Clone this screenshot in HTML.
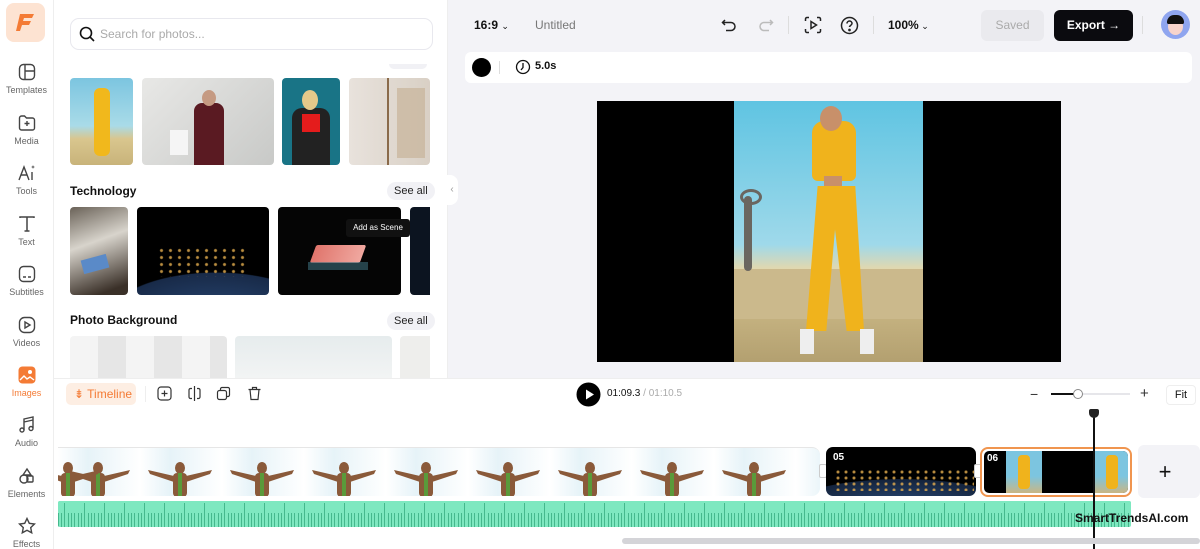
<!DOCTYPE html>
<html><head><meta charset="utf-8"><style>
*{margin:0;padding:0;box-sizing:border-box}
body{width:1200px;height:549px;overflow:hidden;font-family:"Liberation Sans",sans-serif;background:#fff;position:relative;color:#111}
.a{position:absolute}
.side{left:0;top:0;width:54px;height:549px;background:#fff;border-right:1px solid #eee}
.si{position:absolute;left:0;width:53px;text-align:center;font-size:9px;color:#666}
.si svg{display:block;margin:0 auto 4px}
.thumb{position:absolute;border-radius:4px;overflow:hidden}
.seeall{position:absolute;font-size:11px;color:#222;background:#f1f1f5;border-radius:10px;padding:3px 7px}
.h{position:absolute;font-size:12px;font-weight:bold;color:#111}
.ico{position:absolute}
</style></head><body>

<div class="a side">
  <div class="a" style="left:6px;top:3px;width:39px;height:39px;border-radius:8px;background:#fde3d2"></div>
  <svg class="a" style="left:14px;top:10px" width="24" height="24" viewBox="0 0 24 24"><path d="M6 4h14l-2 4H10l-1 3h8l-2 4H8l-2 6H2z" fill="#f47b35"/></svg>
  <div class="si" style="top:63px"><svg width="18" height="18" viewBox="0 0 18 18" fill="none" stroke="#444" stroke-width="1.4"><rect x="1.5" y="1.5" width="15" height="15" rx="4"/><path d="M7 1.5v15M7 8h9.5"/></svg>Templates</div>
  <div class="si" style="top:114px"><svg width="18" height="18" viewBox="0 0 18 18" fill="none" stroke="#444" stroke-width="1.4"><path d="M1.5 4a2 2 0 012-2h3l2 2h6a2 2 0 012 2v8a2 2 0 01-2 2h-11a2 2 0 01-2-2z"/><path d="M9 7v5M6.5 9.5h5"/></svg>Media</div>
  <div class="si" style="top:164px"><svg width="20" height="18" viewBox="0 0 20 18" fill="none" stroke="#444" stroke-width="1.4"><path d="M2 16L7 3l5 13M4 11h6M15 8v8"/><path d="M16 1l.5 1.5L18 3l-1.5.5L16 5l-.5-1.5L14 3l1.5-.5z" fill="#444" stroke="none"/></svg>Tools</div>
  <div class="si" style="top:215px"><svg width="18" height="18" viewBox="0 0 18 18" fill="none" stroke="#444" stroke-width="1.5"><path d="M2 3V2h14v1M9 2v14M6.5 16h5"/></svg>Text</div>
  <div class="si" style="top:265px"><svg width="18" height="18" viewBox="0 0 18 18" fill="none" stroke="#444" stroke-width="1.4"><rect x="1.5" y="1.5" width="15" height="15" rx="4"/><path d="M5 12h3M10 12h3"/></svg>Subtitles</div>
  <div class="si" style="top:316px"><svg width="18" height="18" viewBox="0 0 18 18" fill="none" stroke="#444" stroke-width="1.4"><rect x="1.5" y="1.5" width="15" height="15" rx="5"/><path d="M7 6v6l5-3z"/></svg>Videos</div>
  <div class="si" style="top:366px;color:#f47b35"><svg width="18" height="18" viewBox="0 0 18 18"><rect x="0.5" y="0.5" width="17" height="17" rx="4" fill="#f47b35"/><circle cx="12" cy="6" r="2" fill="#fff"/><path d="M2 14l4-4 3 3 3-2 4 3" fill="none" stroke="#fff" stroke-width="1.4"/></svg>Images</div>
  <div class="si" style="top:416px"><svg width="18" height="18" viewBox="0 0 18 18" fill="none" stroke="#444" stroke-width="1.4"><path d="M6 14V3l9-2v11M6 6l9-2"/><circle cx="4" cy="14" r="2"/><circle cx="13" cy="12.5" r="2"/></svg>Audio</div>
  <div class="si" style="top:467px"><svg width="18" height="18" viewBox="0 0 18 18" fill="none" stroke="#444" stroke-width="1.4"><path d="M9 2l4 6H5z"/><circle cx="6" cy="12" r="4"/><rect x="9" y="9" width="6" height="6" rx="1"/></svg>Elements</div>
  <div class="si" style="top:517px"><svg width="18" height="18" viewBox="0 0 18 18" fill="none" stroke="#444" stroke-width="1.4"><path d="M9 1.5l2.3 4.8 5.2.7-3.8 3.6 1 5.2L9 13.3l-4.7 2.5 1-5.2L1.5 7l5.2-.7z"/></svg>Effects</div>
</div>

<div class="a" style="left:54px;top:0;width:394px;height:378px;background:#fff;border-right:1px solid #eee">
  <div class="a" style="left:16px;top:18px;width:363px;height:32px;border:1px solid #e8e8ee;border-radius:9px"></div>
  <svg class="a" style="left:25px;top:26px" width="16" height="16" viewBox="0 0 16 16" fill="none" stroke="#111" stroke-width="1.6"><circle cx="7" cy="7" r="5.5"/><path d="M11 11l4 4"/></svg>
  <div class="a" style="left:46px;top:27px;font-size:12px;color:#aaa">Search for photos...</div>
  <div class="a" style="left:335px;top:64px;width:38px;height:5px;background:#f1f1f5;border-radius:0 0 5px 5px"></div>
  <div class="thumb" style="left:16px;top:78px;width:63px;height:87px;background:linear-gradient(180deg,#7cc5e0 0%,#a9dbe8 55%,#d9c68e 70%,#c8b37a 100%)">
    <div class="a" style="left:24px;top:10px;width:16px;height:68px;background:#f1b81c;border-radius:6px"></div></div>
  <div class="thumb" style="left:88px;top:78px;width:132px;height:87px;background:linear-gradient(135deg,#e8e8e6,#c8c9c7)">
    <div class="a" style="left:52px;top:25px;width:30px;height:62px;background:#5a1a22;border-radius:8px 8px 0 0"></div>
    <div class="a" style="left:60px;top:12px;width:14px;height:16px;background:#c59a82;border-radius:50%"></div>
    <div class="a" style="left:28px;top:52px;width:18px;height:25px;background:#f5f5f5"></div></div>
  <div class="thumb" style="left:228px;top:78px;width:58px;height:87px;background:#197486">
    <div class="a" style="left:10px;top:30px;width:38px;height:57px;background:#222;border-radius:10px 10px 0 0"></div>
    <div class="a" style="left:20px;top:36px;width:18px;height:18px;background:#e41c1c"></div>
    <div class="a" style="left:20px;top:12px;width:16px;height:20px;background:#e4c98a;border-radius:50%"></div></div>
  <div class="thumb" style="left:295px;top:78px;width:81px;height:87px;background:linear-gradient(90deg,#e8e2dc,#d9d0c5)">
    <div class="a" style="left:38px;top:0;width:2px;height:87px;background:#8a6a4a"></div>
    <div class="a" style="left:48px;top:10px;width:28px;height:70px;background:#c8b39a;opacity:.7"></div></div>
  <div class="h" style="left:16px;top:184px">Technology</div>
  <div class="seeall" style="left:333px;top:182px">See all</div>
  <div class="thumb" style="left:16px;top:207px;width:58px;height:88px;background:linear-gradient(160deg,#6a6258,#d8d4cc 40%,#3a3028 90%)">
    <div class="a" style="left:12px;top:50px;width:26px;height:14px;background:#5a8ac8;transform:rotate(-15deg)"></div></div>
  <div class="thumb" style="left:83px;top:207px;width:132px;height:88px;background:radial-gradient(ellipse 150% 100% at 60% 130%,#2a4a78 0%,#182a48 55%,#000 56%)">
    <div class="a" style="left:20px;top:40px;width:90px;height:30px;background:radial-gradient(circle,#e8b050 1px,transparent 2px) 0 0/9px 7px;opacity:.8"></div></div>
  <div class="thumb" style="left:224px;top:207px;width:123px;height:88px;background:#050505">
    <div class="a" style="left:35px;top:38px;width:50px;height:18px;background:linear-gradient(90deg,#e0756c,#f0a8a0);transform:skewX(-20deg);border-radius:2px"></div>
    <div class="a" style="left:30px;top:55px;width:60px;height:8px;background:#3a6a78;opacity:.6"></div></div>
  <div class="thumb" style="left:356px;top:207px;width:20px;height:88px;background:#0c1420;border-radius:4px 0 0 4px"></div>
  <div class="a" style="left:292px;top:219px;width:64px;height:18px;background:#111;border-radius:3px;color:#fff;font-size:8px;line-height:18px;text-align:center">Add as Scene</div>
  <div class="h" style="left:16px;top:313px">Photo Background</div>
  <div class="seeall" style="left:333px;top:312px">See all</div>
  <div class="thumb" style="left:16px;top:336px;width:157px;height:42px;border-radius:4px 4px 0 0;background:repeating-linear-gradient(90deg,#f4f4f4 0 28px,#e6e6e6 28px 56px)"></div>
  <div class="thumb" style="left:181px;top:336px;width:157px;height:42px;border-radius:4px 4px 0 0;background:linear-gradient(#e6eced,#f2f4f4)"></div>
  <div class="thumb" style="left:346px;top:336px;width:30px;height:42px;border-radius:4px 0 0 0;background:#eeeeec"></div>
</div>

<div class="a" style="left:448px;top:0;width:752px;height:378px;background:#f3f3f7"></div>
<div class="a" style="left:446px;top:175px;width:12px;height:30px;background:#fff;border-radius:0 8px 8px 0;color:#999;font-size:10px;line-height:30px;text-align:center">‹</div>
<div class="a" style="left:474px;top:18px;font-size:12px;font-weight:bold">16:9 <span style="font-weight:normal;font-size:9px">⌄</span></div>
<div class="a" style="left:535px;top:18px;font-size:12px;color:#777">Untitled</div>
<svg class="ico" style="left:721px;top:17px" width="16" height="16" viewBox="0 0 16 16" fill="none" stroke="#222" stroke-width="1.5"><path d="M4 3L1.5 5.5 4 8M1.5 5.5H10a4 4 0 010 8H5"/></svg>
<svg class="ico" style="left:758px;top:17px" width="16" height="16" viewBox="0 0 16 16" fill="none" stroke="#bbb" stroke-width="1.5"><path d="M12 3l2.5 2.5L12 8M14.5 5.5H6a4 4 0 000 8h5"/></svg>
<div class="a" style="left:788px;top:16px;width:1px;height:18px;background:#ddd"></div>
<svg class="ico" style="left:804px;top:16px" width="18" height="18" viewBox="0 0 18 18" fill="none" stroke="#222" stroke-width="1.5"><path d="M1.5 5V3a1.5 1.5 0 011.5-1.5h2M13 1.5h2A1.5 1.5 0 0116.5 3v2M16.5 13v2a1.5 1.5 0 01-1.5 1.5h-2M5 16.5H3A1.5 1.5 0 011.5 15v-2"/><path d="M7 5.5v7l5.5-3.5z"/></svg>
<svg class="ico" style="left:840px;top:16px" width="19" height="19" viewBox="0 0 19 19" fill="none" stroke="#222" stroke-width="1.5"><circle cx="9.5" cy="9.5" r="8"/><path d="M7 7.5a2.5 2.5 0 115 0c0 1.7-2.5 2-2.5 3.5"/><circle cx="9.5" cy="14" r=".6" fill="#222"/></svg>
<div class="a" style="left:873px;top:16px;width:1px;height:18px;background:#ddd"></div>
<div class="a" style="left:888px;top:18px;font-size:12px;font-weight:bold">100%<span style="font-weight:normal;font-size:9px"> ⌄</span></div>
<div class="a" style="left:981px;top:10px;width:63px;height:31px;background:#eaeaee;border-radius:6px;color:#aaa;font-size:12px;line-height:31px;text-align:center">Saved</div>
<div class="a" style="left:1054px;top:10px;width:79px;height:31px;background:#0b0b0f;border-radius:6px;color:#fff;font-size:12px;font-weight:bold;line-height:31px;text-align:center">Export →</div>
<div class="a" style="left:1142px;top:16px;width:1px;height:18px;background:#ddd"></div>
<div class="a" style="left:1161px;top:10px;width:29px;height:29px;border-radius:50%;background:#8fa5ef;overflow:hidden">
  <div class="a" style="left:7px;top:8px;width:15px;height:17px;border-radius:50%;background:#f7d4cc"></div>
  <div class="a" style="left:6px;top:5px;width:17px;height:9px;border-radius:8px 8px 2px 2px;background:#111"></div></div>
<div class="a" style="left:465px;top:52px;width:727px;height:31px;background:#fff;border-radius:6px"></div>
<div class="a" style="left:472px;top:58px;width:19px;height:19px;border-radius:50%;background:#000"></div>
<div class="a" style="left:499px;top:61px;width:1px;height:13px;background:#ddd"></div>
<svg class="ico" style="left:515px;top:59px" width="16" height="16" viewBox="0 0 16 16" fill="none" stroke="#111" stroke-width="1.3"><circle cx="8" cy="8" r="6.5"/><path d="M8 4v4.5L6 11"/></svg>
<div class="a" style="left:535px;top:60px;font-size:11px;font-weight:bold">5.0s</div>
<div class="a" style="left:597px;top:101px;width:464px;height:261px;background:#000"></div>
<div class="a" style="left:734px;top:101px;width:189px;height:261px;overflow:hidden;background:linear-gradient(180deg,#5fc4e2 0%,#9fd9ea 55%,#e0d8b0 64%,#c9b684 78%,#b3a070 100%)">
  <div class="a" style="left:0;top:168px;width:189px;height:50px;background:#cbb98c"></div>
  <div class="a" style="left:10px;top:95px;width:8px;height:75px;background:#6a6660;border-radius:4px"></div>
  <div class="a" style="left:6px;top:88px;width:22px;height:16px;border:3px solid #6a6660;border-radius:50%"></div>
  <div class="a" style="left:78px;top:20px;width:44px;height:60px;background:#f0b31c;border-radius:12px 12px 6px 6px"></div>
  <div class="a" style="left:86px;top:5px;width:22px;height:25px;background:#c8906a;border-radius:50%"></div>
  <div class="a" style="left:90px;top:75px;width:18px;height:10px;background:#c8906a"></div>
  <div class="a" style="left:72px;top:85px;width:58px;height:145px;background:#f0b31c;clip-path:polygon(20% 0,85% 0,100% 100%,70% 100%,50% 30%,35% 100%,0 100%)"></div>
  <div class="a" style="left:66px;top:228px;width:14px;height:25px;background:#eee"></div>
  <div class="a" style="left:126px;top:228px;width:14px;height:25px;background:#eee"></div>
</div>

<div class="a" style="left:54px;top:378px;width:1146px;height:171px;background:#fff;border-top:1px solid #eee"></div>
<div class="a" style="left:66px;top:383px;width:70px;height:22px;background:#fdeee3;border-radius:5px;color:#f47b35;font-size:12px;line-height:22px;padding-left:8px">⇟ Timeline</div>
<div class="a" style="left:145px;top:386px;width:1px;height:16px;background:#eee"></div>
<svg class="ico" style="left:157px;top:386px" width="15" height="15" viewBox="0 0 15 15" fill="none" stroke="#333" stroke-width="1.2"><rect x="1" y="1" width="13" height="13" rx="3"/><path d="M7.5 4.5v6M4.5 7.5h6"/></svg>
<svg class="ico" style="left:187px;top:386px" width="15" height="15" viewBox="0 0 15 15" fill="none" stroke="#333" stroke-width="1.2"><path d="M7.5 0v15M5 2.5H3.5A1.5 1.5 0 002 4v7a1.5 1.5 0 001.5 1.5H5M10 2.5h1.5A1.5 1.5 0 0113 4v7a1.5 1.5 0 01-1.5 1.5H10"/></svg>
<svg class="ico" style="left:216px;top:386px" width="15" height="15" viewBox="0 0 15 15" fill="none" stroke="#333" stroke-width="1.2"><rect x="1.5" y="4.5" width="9" height="9" rx="2"/><path d="M4.5 4.5V3a1.5 1.5 0 011.5-1.5h6A1.5 1.5 0 0113.5 3v6a1.5 1.5 0 01-1.5 1.5h-1.5"/></svg>
<svg class="ico" style="left:247px;top:386px" width="15" height="15" viewBox="0 0 15 15" fill="none" stroke="#333" stroke-width="1.2"><path d="M1.5 3.5h12M5.5 3.5V1.5h4v2M3 3.5l1 10h7l1-10"/></svg>
<svg class="ico" style="left:576px;top:382px" width="25" height="25" viewBox="0 0 25 25"><circle cx="12.5" cy="12.5" r="12" fill="#000"/><path d="M10 7.5v10l8-5z" fill="#fff"/></svg>
<div class="a" style="left:607px;top:388px;font-size:10px">01:09.3 <span style="color:#aaa">/ 01:10.5</span></div>
<div class="a" style="left:1030px;top:386px;font-size:14px;color:#333">−</div>
<div class="a" style="left:1051px;top:393px;width:26px;height:2px;background:#111"></div>
<div class="a" style="left:1077px;top:393px;width:53px;height:2px;background:#e6e6ea"></div>
<div class="a" style="left:1073px;top:389px;width:10px;height:10px;border-radius:50%;background:#fff;border:1px solid #888"></div>
<div class="a" style="left:1140px;top:385px;font-size:15px;color:#333">+</div>
<div class="a" style="left:1166px;top:385px;width:30px;height:20px;border:1px solid #eee;border-radius:4px;font-size:11px;line-height:18px;text-align:center">Fit</div>

<div class="a" style="left:58px;top:447px;width:762px;height:49px;border-radius:0 8px 8px 0;overflow:hidden;border-top:1px solid #e6e6e6;background:repeating-linear-gradient(90deg,#fff 0,#e6f3f8 30px,#fff 82px)">
  <svg width="762" height="49" style="position:absolute;left:0;top:0">
    <g fill="#8a5a3a">
      <g id="m"><ellipse cx="40" cy="20" rx="5" ry="6"/><rect x="33" y="25" width="14" height="24" rx="4"/><path d="M34 28L8 22 10 26 34 34zM46 28L72 22 70 26 46 34z"/><rect x="38" y="25" width="4" height="24" fill="#5a9a3a"/></g>
      <use href="#m" x="82"/><use href="#m" x="164"/><use href="#m" x="246"/><use href="#m" x="328"/><use href="#m" x="410"/><use href="#m" x="492"/><use href="#m" x="574"/><use href="#m" x="656"/>
      <use href="#m" x="-30"/>
    </g>
  </svg>
</div>
<div class="a" style="left:819px;top:464px;width:8px;height:14px;background:#fff;border:1px solid #ccc;border-radius:2px"></div>
<div class="a" style="left:826px;top:447px;width:150px;height:49px;border-radius:7px;overflow:hidden;background:radial-gradient(ellipse 120% 90% at 50% 120%,#2a4a78 0%,#14233c 60%,#000 61%)">
  <div class="a" style="left:8px;top:22px;width:140px;height:22px;background:radial-gradient(circle,#e8b050 1px,transparent 2px) 0 0/8px 6px;opacity:.8"></div>
  <div class="a" style="left:7px;top:5px;color:#fff;font-size:10px;font-weight:bold">05</div></div>
<div class="a" style="left:974px;top:464px;width:8px;height:14px;background:#fff;border:1px solid #ccc;border-radius:2px"></div>
<div class="a" style="left:980px;top:447px;width:152px;height:50px;border:2px solid #f0954f;border-radius:8px;background:#fff"></div>
<div class="a" style="left:984px;top:451px;width:144px;height:42px;border-radius:5px;overflow:hidden;background:#000">
  <div class="a" style="left:22px;top:0;width:36px;height:42px;background:linear-gradient(#7cc5e0 60%,#c9b684)"><div class="a" style="left:12px;top:4px;width:12px;height:34px;background:#f0b31c;border-radius:4px"></div></div>
  <div class="a" style="left:110px;top:0;width:34px;height:42px;background:linear-gradient(#7cc5e0 60%,#c9b684)"><div class="a" style="left:12px;top:4px;width:12px;height:34px;background:#f0b31c;border-radius:4px"></div></div>
  <div class="a" style="left:3px;top:2px;color:#fff;font-size:10px;font-weight:bold">06</div></div>
<div class="a" style="left:1138px;top:445px;width:62px;height:53px;background:#f3f3f7;border-radius:6px;font-size:22px;line-height:53px;text-align:center;padding-right:8px">+</div>
<div class="a" style="left:58px;top:501px;width:1073px;height:26px;border-radius:2px;background:#7ee8c0;overflow:hidden">
  <div class="a" style="left:0;top:2px;width:1073px;height:24px;background:repeating-linear-gradient(90deg,#45b88d 0 1px,transparent 1px 3px,#45b88d 3px 4px,transparent 4px 6px,#45b88d 6px 7px,transparent 7px 10px)"></div>
  <div class="a" style="left:0;top:0;width:1073px;height:12px;background:repeating-linear-gradient(90deg,#7ee8c0 0 5px,transparent 5px 9px,#7ee8c0 9px 17px,transparent 17px 20px)"></div>
</div>
<div class="a" style="left:1075px;top:511px;font-size:12px;font-weight:bold;color:#111">SmartTrendsAI.com</div>
<div class="a" style="left:1093px;top:414px;width:2px;height:135px;background:#111"></div>
<div class="a" style="left:1089px;top:409px;width:10px;height:9px;background:#222;border-radius:2px 2px 5px 5px"></div>
<div class="a" style="left:622px;top:538px;width:578px;height:6px;background:#d4d4d8;border-radius:3px"></div>
</body></html>
